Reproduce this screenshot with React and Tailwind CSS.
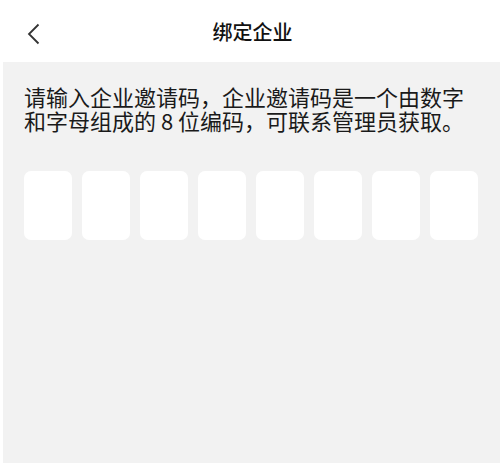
import React, { useState } from 'react';

const CODE_LENGTH = 8;

const BindCompany = () => {
  const [code] = useState(Array(CODE_LENGTH).fill(''));

  return (
    <div
      className="w-[502px] h-[463px] bg-white flex flex-col overflow-hidden"
      style={{ fontFamily: '"Noto Sans CJK SC", "Noto Sans", sans-serif' }}
    >
      {/* top bar */}
      <div className="h-[62px] shrink-0 flex items-center relative">
        <button className="absolute left-[24px] top-[21px] w-[18px] h-[26px] flex items-center justify-center text-[#333]">
          <svg width="13" height="22" viewBox="0 0 13 22" fill="none">
            <path d="M11.5 1.5 L2 11 L11.5 20.5" stroke="currentColor" strokeWidth="1.8" />
          </svg>
        </button>
        <h1 className="w-full text-center text-[20px] font-medium leading-none text-[#111] pl-[3px] mt-[2px]">绑定企业</h1>
      </div>

      <div className="flex-1 bg-[#f2f2f2] ml-[3px] mr-[2px] pl-[21px] pr-[20px] pt-[22px]">
        <p className="text-[22px] leading-[24px] text-[#1a1a1a]">
          请输入企业邀请码，企业邀请码是一个由数字和字母组成的 8 位编码，可联系管理员获取。
        </p>

        <div className="flex gap-[10px] mt-[39px]">
          {code.map((c, i) => (
            <div
              key={i}
              className="w-[48px] h-[69px] bg-white rounded-[7px] flex items-center justify-center text-[24px] text-[#222]"
            >
              {c}
            </div>
          ))}
        </div>
      </div>
    </div>
  );
};

export default function App() {
  return <BindCompany />;
}
